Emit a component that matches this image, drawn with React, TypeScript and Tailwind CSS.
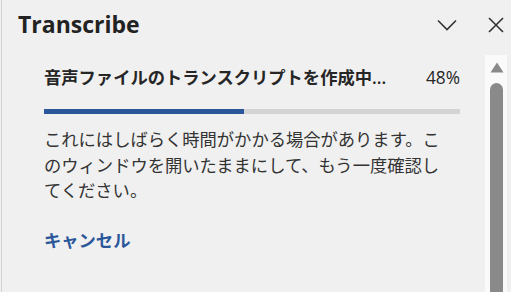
export default function App() {
  const progress = 48;
  const font = { fontFamily: '"Open Sans", "Noto Sans CJK JP", sans-serif' };

  return (
    <div className="w-[511px] h-[292px] bg-[#f0f0f0] flex overflow-hidden" style={font}>
      {/* ── left edge ── */}
      <div className="w-px ml-px bg-[#d3d3d3]" />

      <div className="flex-1 flex flex-col min-w-0">
        {/* ── Header ── */}
        <div className="h-[49px] flex items-center pl-[16px] shrink-0">
          <h1 className="text-[23px] leading-[24px] font-bold text-[#222] pb-[2px]">Transcribe</h1>
          <div className="ml-auto flex items-center">
            <button className="w-[20px] h-[12px] flex items-center justify-center mr-[31px]">
              <svg width="20" height="12" viewBox="0 0 20 12" fill="none" stroke="#333" strokeWidth="1.6">
                <path d="M1 1.5L10 10.5L19 1.5" />
              </svg>
            </button>
            <button className="w-[16px] h-[16px] flex items-center justify-center mr-[7px]">
              <svg width="16" height="16" viewBox="0 0 16 16" fill="none" stroke="#333" strokeWidth="1.6">
                <path d="M1 1L15 15M15 1L1 15" />
              </svg>
            </button>
          </div>
        </div>

        {/* ── Body ── */}
        <div className="flex flex-1 min-h-0 pt-[6px]">
          <div className="w-[416px] ml-[42px] pt-[11px]">
            <div className="flex items-center justify-between h-[24px] text-[17.3px] text-[#262626]">
              <span className="font-semibold">音声ファイルのトランスクリプトを作成中...</span>
              <span>{progress}%</span>
            </div>

            <div className="mt-[19px] h-[5px] bg-[#d4d4d4]">
              <div className="h-full bg-[#2b579a]" style={{ width: `${progress}%` }} />
            </div>

            <p className="mt-[13px] text-[17.3px] leading-[25.5px] text-[#333] whitespace-nowrap">
              これにはしばらく時間がかかる場合があります。こ
              <br />
              のウィンドウを開いたままにして、もう一度確認し
              <br />
              てください。
            </p>

            <button className="mt-[24px] h-[24px] text-[17.3px] font-bold text-[#2b579a]">キャンセル</button>
          </div>

          {/* ── Scrollbar ── */}
          <div className="ml-auto mr-[4px] w-[22px] bg-[#fafafa] flex flex-col items-center pl-px">
            <svg width="14" height="11" viewBox="0 0 14 11" className="mt-[7px]">
              <path d="M7 0.5L13.5 10.5H0.5Z" fill="#8a8a8a" />
            </svg>
            <div className="mt-[10px] w-[13px] flex-1 bg-[#8a8a8a] rounded-t-full" />
          </div>
        </div>
      </div>
    </div>
  );
}
